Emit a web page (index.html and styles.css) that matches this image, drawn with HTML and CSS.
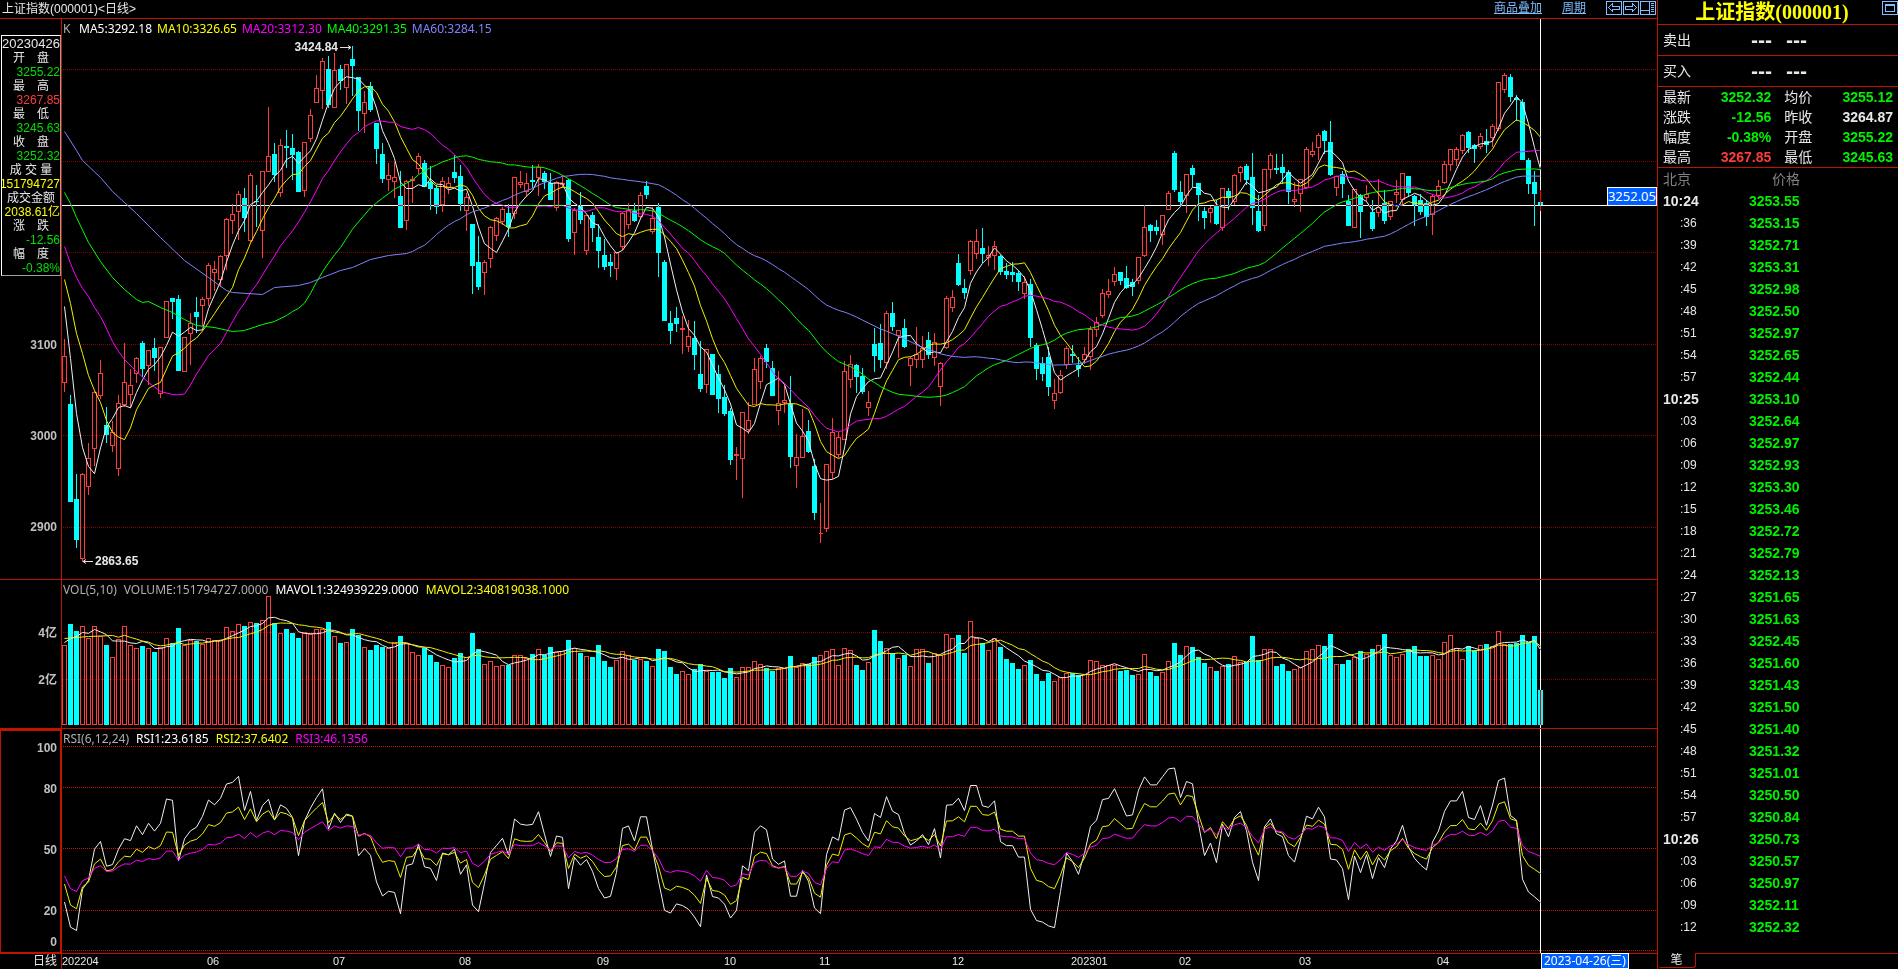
FILE: index.html
```html
<!DOCTYPE html>
<html lang="zh-CN">
<head>
<meta charset="utf-8">
<title>上证指数(000001)</title>
<link rel="stylesheet" href="styles.css">
</head>
<body>
<div class="app">
  <main class="board">
    <header class="topbar">
      <h1 class="topbar-title">上证指数(000001)&lt;日线&gt;</h1>
      <nav class="topbar-tools">
        <a class="tool-link" href="#overlay">商品叠加</a>
        <a class="tool-link" href="#period">周期</a>
        <div class="tool-buttons">
          <button class="icon-button" type="button" aria-label="左移"><svg width="17" height="15" viewBox="0 0 17 15"><path d="M.5 1.500h15v13H.5z M2.500 7.500l4-4v2.500h7v3h-7v2.500z"/></svg></button>
          <button class="icon-button" type="button" aria-label="右移"><svg width="17" height="15" viewBox="0 0 17 15"><path d="M.5 1.500h15v13H.5z M13.500 7.500l-4-4v2.500h-7v3h7v2.500z"/></svg></button>
          <button class="icon-button" type="button" aria-label="分栏"><svg width="17" height="15" viewBox="0 0 17 15"><path d="M.5 1.500h15v13H.5z M9.500 1.500v13 M.5 10.500h9 M11 3.500h3 M11 5.500h3 M11 7.500h3 M11 9.500h3 M11 11.500h3"/></svg></button>
        </div>
      </nav>
    </header>

    <section class="pane pane-price">
      <div class="axis axis-price">
        <dl class="info">
          <dd class="info-date">20230426</dd>
          <dt>开　盘</dt><dd class="down">3255.22</dd>
          <dt>最　高</dt><dd class="up">3267.85</dd>
          <dt>最　低</dt><dd class="down">3245.63</dd>
          <dt>收　盘</dt><dd class="down">3252.32</dd>
          <dt>成 交 量</dt><dd class="amount">151794727</dd>
          <dt>成交金额</dt><dd class="amount">2038.61亿</dd>
          <dt>涨　跌</dt><dd class="down">-12.56</dd>
          <dt>幅　度</dt><dd class="down">-0.38%</dd>
        </dl>
        <ul class="scale scale-price"><li>3100</li><li>3000</li><li>2900</li></ul>
      </div>
      <div class="plot">
        <svg id="price" class="chart" viewBox="62 19 1595 560" preserveAspectRatio="none"></svg>
        <p class="legend"><span class="c-name legend-k">K</span><span class="c-white">MA5:3292.18</span><span class="c-yellow">MA10:3326.65</span><span class="c-magenta">MA20:3312.30</span><span class="c-green">MA40:3291.35</span><span class="c-blue">MA60:3284.15</span></p>
        <span class="mark mark-high">3424.84<svg width="13" height="7" viewBox="0 0 13 7"><path d="M1 3.500h11 M9 1.500l3 2-3 2"/></svg></span>
        <span class="mark mark-low"><svg width="12" height="7" viewBox="0 0 12 7"><path d="M1 3.500h10 M4 1.500l-3 2 3 2"/></svg>2863.65</span>
        <span class="tag tag-price">3252.05</span>
      </div>
    </section>

    <section class="pane pane-volume">
      <div class="axis"><ul class="scale scale-volume"><li>4亿</li><li>2亿</li></ul></div>
      <div class="plot">
        <svg id="volume" class="chart" viewBox="62 580 1595 148" preserveAspectRatio="none"></svg>
        <p class="legend legend-wide"><span class="c-name">VOL(5,10)</span><span class="c-name">VOLUME:151794727.0000</span><span class="c-white">MAVOL1:324939229.0000</span><span class="c-yellow">MAVOL2:340819038.1000</span></p>
      </div>
    </section>

    <section class="pane pane-rsi">
      <div class="axis axis-active"><ul class="scale scale-rsi"><li>100</li><li>80</li><li>50</li><li>20</li><li>0</li></ul></div>
      <div class="plot">
        <svg id="rsi" class="chart" viewBox="62 729 1595 224" preserveAspectRatio="none"></svg>
        <p class="legend legend-wide"><span class="c-name">RSI(6,12,24)</span><span class="c-white">RSI1:23.6185</span><span class="c-yellow">RSI2:37.6402</span><span class="c-magenta">RSI3:46.1356</span></p>
      </div>
    </section>

    <footer class="timeline">
      <span class="timeline-name">日线</span>
      <div class="timeline-scale">
        <span>202204</span><span>06</span><span>07</span><span>08</span><span>09</span><span>10</span><span>11</span><span>12</span><span>202301</span><span>02</span><span>03</span><span>04</span>
        <span class="tag tag-date">2023-04-26(三)</span>
      </div>
    </footer>
  </main>

  <aside class="side">
    <header class="side-head">
      <h2 class="side-title">上证指数(000001)</h2>
      <button class="icon-button side-window" type="button" aria-label="窗口"><svg width="16" height="15" viewBox="0 0 16 15"><path d="M.5 1.500h15v13H.5z M3.500 4.500h9v7h-9z M3.500 5.500h9"/></svg></button>
    </header>
    <div class="order"><span>卖出</span><b>---</b><b>---</b></div>
    <div class="order"><span>买入</span><b>---</b><b>---</b></div>
    <table class="quote">
      <tr><th>最新</th><td class="down">3252.32</td><th>均价</th><td class="down">3255.12</td></tr>
      <tr><th>涨跌</th><td class="down">-12.56</td><th>昨收</th><td>3264.87</td></tr>
      <tr><th>幅度</th><td class="down">-0.38%</td><th>开盘</th><td class="down">3255.22</td></tr>
      <tr><th>最高</th><td class="up">3267.85</td><th>最低</th><td class="down">3245.63</td></tr>
    </table>
    <table class="ticks">
      <thead><tr><th>北京</th><th>价格</th></tr></thead>
      <tbody id="ticks"></tbody>
    </table>
    <footer class="side-foot"><button class="side-tab" type="button">笔</button><span class="side-rule"></span></footer>
  </aside>
</div>
<script src="chart.js"></script>
</body>
</html>
```

FILE: styles.css
```css
* { box-sizing: border-box; }

body {
  margin: 0;
  background: #000;
  color: #e8e8e8;
  font: 12px/14px "Liberation Sans", "Noto Sans CJK SC", sans-serif;
}

h1, h2, p, ul, dl, dd { margin: 0; padding: 0; font-weight: normal; }
ul { list-style: none; }
table { border-collapse: collapse; }
button { padding: 0; border: 0; background: none; color: inherit; font: inherit; }

.app {
  display: grid;
  grid-template-columns: minmax(0, 1fr) 241px;
  min-height: 100vh;
}

.board {
  display: grid;
  grid-template-rows: 19px minmax(0, 561fr) minmax(0, 149fr) minmax(0, 225fr) 15px;
  min-width: 0;
}

.topbar {
  display: flex;
  justify-content: space-between;
  border-bottom: 1px solid #c01400;
}
.topbar-title { padding-left: 2px; font-size: 12px; line-height: 18px; }
.topbar-tools { display: flex; gap: 20px; line-height: 17px; }
.tool-link { color: #80bcff; text-decoration: underline; }
.tool-buttons { display: flex; }
.icon-button { display: block; height: 15px; }
.icon-button svg { display: block; fill: none; stroke: #80bcff; shape-rendering: crispEdges; }

.pane {
  display: grid;
  grid-template-columns: 61px minmax(0, 1fr);
  min-height: 0;
  border-bottom: 1px solid #c01400;
}
.plot { position: relative; min-height: 0; border-left: 1px solid #c01400; }
.chart { display: block; width: 100%; height: 100%; background: #000; }

.axis { min-height: 0; overflow: hidden; }
.axis-active { border: 2px solid #c01400; border-width: 2px 1px 1px 1px; }
.scale {
  display: flex;
  flex-direction: column;
  padding-right: 4px;
  color: #c0c0c0;
  font-weight: bold;
  line-height: 14px;
  text-align: right;
}
.scale-price { gap: 77px; padding-top: 62px; }
.scale-volume { gap: 33px; padding-top: 46px; }
.scale-rsi { display: grid; grid-template-rows: 41px 61px 61px 31px 14px; padding: 10px 3px 0 0; }

.info {
  margin: 16px 0 0 1px;
  padding-top: 1px;
  border: 1px solid #fff;
  border-color: #fff #a0a0a0 #a0a0a0 #fff;
  line-height: 14px;
}
.info dt { text-align: center; white-space: pre; }
.info dd {
  display: flex;
  justify-content: flex-end;
  height: 14px;
  overflow: hidden;
  white-space: nowrap;
}
.info .info-date { justify-content: center; font-size: 13px; }
.info .down { color: #00e000; }
.info .amount { color: #ff0; }

.down { color: #00f000; }
.up { color: #ff3c3c; }

.legend {
  position: absolute;
  top: 1px;
  left: 1px;
  display: flex;
  gap: 5px;
  font: 12px/17px "Noto Sans", sans-serif;
}
.legend-wide { gap: 7px; }
.legend-k { width: 11px; }
.c-name { color: #b0b0b0; }
.c-white { color: #fff; }
.c-yellow { color: #ff0; }
.c-magenta { color: #f0f; }
.c-green { color: #0f0; }
.c-blue { color: #8080ff; }

.mark { position: absolute; display: flex; align-items: center; gap: 1px; font-weight: bold; }
.mark svg { fill: none; stroke: #e0e0e0; }
.mark-high { top: 21px; right: 1305px; }
.mark-low { left: 20px; bottom: 11px; }

.tag {
  position: absolute;
  border: 1px solid #fff;
  background: #0060ff;
  color: #fff;
  font-family: "Noto Sans", "Noto Sans CJK SC", sans-serif;
  white-space: nowrap;
}
.tag-price { top: 168px; right: 0; font-size: 13px; line-height: 17px; }
.tag-date { top: -1px; left: 1479px; padding: 0 2px; font-size: 12px; line-height: 14px; }

.timeline { display: grid; grid-template-columns: 61px minmax(0, 1fr); line-height: 15px; }
.timeline-name { padding-right: 4px; text-align: right; }
.timeline-scale {
  position: relative;
  display: grid;
  grid-template-columns: 145fr 126fr 126fr 138fr 127fr 95fr 133fr 119fr 108fr 120fr 138fr 220fr;
  border-left: 1px solid #c01400;
  font-size: 11px;
}

.side {
  display: flex;
  flex-direction: column;
  border-left: 1px solid #c01400;
}
.side-head {
  display: flex;
  height: 25px;
  border-bottom: 1px solid #c01400;
}
.side-title {
  flex: 1;
  padding-left: 4px;
  color: #ff0;
  font: bold 20px/24px "Liberation Serif", "Noto Sans CJK SC", serif;
  text-align: center;
}
.order {
  display: grid;
  grid-template-columns: 88px 35px 1fr;
  height: 31px;
  padding-left: 5px;
  border-bottom: 1px solid #c01400;
  font-size: 14px;
  line-height: 30px;
}
.order b { font: bold 17px/32px "DejaVu Sans", sans-serif; }

.quote { width: 100%; font-size: 14px; line-height: 20px; }
.quote th { padding: 0 0 0 5px; font-weight: normal; text-align: left; }
.quote th + td + th { padding-left: 13px; }
.quote td { padding: 0; font-weight: bold; text-align: right; }
.quote td:last-child { padding-right: 5px; }
.quote td:nth-child(2) { width: 70px; }

.ticks { margin-bottom: auto; border-top: 1px solid #c01400; border-collapse: separate; border-spacing: 0; font-size: 14px; }
.ticks th { padding: 0 0 0 5px; color: #808080; font-weight: normal; line-height: 22px; text-align: left; }
.ticks th + th { padding-left: 73px; }
.ticks td { padding: 0; color: #00f000; font-weight: bold; line-height: 22px; }
.ticks td + td { padding-left: 50px; }
.ticks .tick-minute { width: 41px; padding-left: 5px; color: #e8e8e8; }
.ticks .tick-second { padding-left: 22px; color: #e8e8e8; font-size: 12px; font-weight: normal; }

.side-foot { display: flex; height: 16px; }
.side-tab {
  width: 38px;
  height: 15px;
  border: 1px solid #c01400;
  border-width: 0 1px 1px 0;
  border-radius: 0 0 3px 3px;
  line-height: 14px;
}
.side-rule { flex: 1; border-top: 1px solid #c01400; }

.grid { stroke: #8c0000; stroke-dasharray: 1 1; shape-rendering: crispEdges; }
.grid-bright { stroke: #c81400; }
.rise { fill: none; stroke: #ff3c3c; shape-rendering: crispEdges; }
.fall { fill: #0ff; stroke: none; shape-rendering: crispEdges; }
.line { fill: none; stroke-width: 1; }
.line-white { stroke: #f0f0f0; }
.line-yellow { stroke: #f0f000; }
.line-magenta { stroke: #f0f; }
.line-green { stroke: #0f0; }
.line-blue { stroke: #8080ff; }
.cross { fill: #fff; mix-blend-mode: difference; shape-rendering: crispEdges; }
```

FILE: chart.js
```js
// Daily candles: kind (R rise, F fall), high, body top, body bottom, low, in chart units.
const CANDLES = `R339,356,382,391 F395,404,502,502 F474,499,540,548 R473,474,558,561 R443,458,486,494 R391,392,448,465 R360,373,395,398 F407,425,435,443 R421,432,445,451 R395,403,468,475
R343,382,404,406 R369,385,394,407 R357,358,373,382 F341,343,369,377 R350,350,365,384 F338,348,358,371 R347,347,393,397 R301,301,337,337 F298,298,302,319 F295,299,371,371
R337,337,371,371 R313,323,333,364 F297,312,317,333 R297,299,305,325 R263,265,298,305 R261,269,272,290 R255,256,279,286 R218,219,255,269 R204,214,220,233 R191,194,211,239
F188,198,218,232 R173,175,240,241 F185,201,202,227 R171,171,230,257 R107,156,171,171 F143,154,175,182 R139,145,192,196 F130,146,148,168 F134,148,155,180 F151,152,192,192
R142,142,190,196 R109,115,138,141 R75,88,102,102 R58,61,90,108 F56,69,105,108 R53,70,107,107 F65,69,81,90 R64,64,87,103 F46,59,66,96 F77,77,111,131
R91,102,113,132 F82,86,110,112 F123,123,149,164 F143,154,179,183 R163,175,179,190 R162,177,181,197 F171,196,228,228 R180,181,220,229 R176,179,180,202 R153,156,168,173
F160,163,187,187 F166,182,189,210 F185,188,207,214 R177,181,204,211 R177,183,187,193 F155,172,178,183 F165,176,204,211 R193,197,210,230 F224,224,266,294 F236,262,287,290
R260,262,272,294 R226,227,258,267 R217,218,235,240 R207,209,221,224 F204,213,227,237 R177,177,213,218 R171,182,184,187 R173,183,191,195 F165,180,182,188 R164,167,177,195
F171,173,182,189 F173,183,200,200 R181,182,207,210 R175,183,184,187 F179,180,239,242 R208,210,232,254 F192,206,220,224 R215,215,250,254 F212,215,228,242 F224,237,251,268
F239,255,267,270 F254,262,266,277 R252,252,268,279 R212,213,246,249 R203,210,224,228 F203,211,221,222 R192,195,216,218 F181,186,195,199 R207,218,231,233 F203,207,253,277
F260,262,321,321 F311,323,331,344 F307,318,324,332 R316,328,329,353 R320,336,346,351 F321,338,355,370 F341,374,389,392 R349,349,384,392 F354,354,395,395 F365,374,399,413
F385,397,414,416 F408,411,460,465 R447,454,455,479 R412,412,458,497 R402,420,429,433 R358,369,404,404 R356,358,381,388 F344,348,362,368 F361,368,396,396 R371,403,410,424
R386,400,402,412 F376,404,457,468 R434,457,465,487 R409,436,457,457 F420,431,452,453 F459,466,513,520 R503,533,533,542 R464,464,528,531 R418,432,472,478 R432,437,454,457
R361,371,439,439 R355,364,379,387 F364,365,377,393 F368,376,392,394 R391,402,407,415 F328,344,356,372 F324,343,360,368 R311,313,362,368 F302,313,327,331 R330,330,335,357
F319,328,347,348 R357,358,365,385 R327,354,359,367 R336,348,359,367 F332,340,355,359 R333,342,357,365 R362,363,386,405 R296,298,347,348 R290,297,307,311 F254,263,285,286
F279,288,293,299 R240,241,270,274 R229,241,253,258 F228,248,254,263 R246,255,257,265 R241,246,255,269 F255,256,272,275 F263,271,275,279 F262,272,275,282 F270,273,282,291
R276,282,293,298 F279,284,338,347 F343,345,369,380 F357,363,374,381 F347,357,387,396 R379,393,400,408 R370,375,392,393 R346,348,364,368 F345,354,356,363 F357,365,369,377
R347,354,359,363 R326,329,356,369 R317,322,329,336 R289,293,315,317 R279,291,294,297 R267,274,281,285 F272,272,281,285 F266,278,288,289 F279,282,287,296 R257,257,280,283
R205,227,255,256 F224,225,231,242 F220,227,231,235 R215,215,234,244 R191,193,209,209 F151,153,190,192 F181,192,202,205 R174,174,195,212 F165,168,175,187 F183,183,195,221
F207,211,218,229 R206,208,212,222 F200,205,224,225 R188,188,227,230 F188,191,198,210 R174,175,201,204 R166,167,172,181 F164,166,180,185 F153,177,208,225 F195,211,231,232
R169,169,225,230 R153,155,169,178 F154,168,170,174 F154,167,173,184 F170,172,192,204 R182,199,201,206 R179,179,193,211 R147,149,187,188 R142,151,154,156 R133,135,147,159
F130,131,141,154 F121,142,175,176 R176,176,187,195 F171,174,184,198 F195,201,226,226 R189,189,227,227 F194,195,212,238 R185,194,197,201 F200,212,229,231 R179,207,212,216
F190,203,221,224 R201,201,216,219 R180,192,194,202 R173,173,199,204 F176,176,193,197 F195,196,205,226 F194,200,212,215 F200,203,217,226 R194,196,214,234 R180,186,195,198
R161,164,182,183 R149,149,164,170 R147,149,159,165 R134,135,150,153 F131,132,148,153 F144,145,149,163 R133,136,146,148 F129,141,145,153 R124,126,137,146 R82,82,128,130
R73,75,89,92 F74,77,97,102 F95,98,100,121 F99,102,160,160 F158,160,184,194 F171,182,194,226 F190,202,205,211`
  .split(/\s+/)
  .map(s => ({ rise: s[0] === 'R', v: s.slice(1).split(',').map(Number) }));

const VOLUMES = `645 624 631 626 638 626 636 645 657 639 626 645 648 646 648 652 647 638 643 628 645 640 641 644 638 640 640 627 631 624
626 622 623 620 596 623 633 629 633 638 632 634 629 629 622 636 643 642 629 635 647 650 645 647 648 642 636 643 652 655
648 655 662 665 667 658 653 657 633 649 664 661 666 665 665 655 655 658 654 649 655 647 652 651 640 648 653 656 657 645
661 667 660 651 655 660 659 661 666 649 651 667 674 671 674 669 664 671 672 672 678 668 677 667 667 661 664 668 671 668
668 656 667 663 664 657 655 651 649 665 648 650 665 670 662 630 641 648 653 658 655 666 649 649 663 653 655 634 638 635
653 621 638 643 650 638 647 659 663 669 665 660 674 681 673 681 677 673 673 675 674 660 661 665 665 665 671 670 675 674
654 672 676 672 661 643 655 646 647 657 663 667 671 666 664 656 662 662 636 660 649 649 666 664 671 669 667 651 649 645
646 634 664 664 660 657 651 654 649 645 634 655 657 654 649 646 656 656 655 659 642 635 648 659 646 650 645 644 646 631
644 644 643 635 642 636 690`.split(/\s+/).map(Number);

// Values of each average before its own window is filled: [day, value].
const SEEDS = {
  ma5: [[0, 306], [1, 358], [2, 413], [3, 447]],
  ma10: [[0, 279], [1, 303], [2, 333], [3, 353], [4, 375], [5, 390], [6, 402], [7, 420], [8, 432]],
  ma20: [[0, 246], [1, 263], [2, 277], [3, 288], [4, 296], [5, 307], [6, 316], [7, 328], [8, 341], [9, 351], [10, 359], [12, 371], [14, 382], [16, 391], [18, 394]],
  ma40: [[0, 192], [1, 203], [2, 217], [4, 242], [6, 261], [8, 277], [10, 289], [12, 299], [13, 302], [14, 301], [16, 307], [18, 312], [20, 319], [22, 325], [25, 327], [28, 331], [30, 330], [33, 324], [35, 321], [37, 315], [38, 311]],
  ma60: [[0, 131], [2, 150], [3, 160], [6, 177], [8, 191], [12, 213], [16, 237], [20, 260], [24, 277], [27, 290], [28, 292], [33, 294], [35, 287], [39, 285], [41, 282], [43, 277], [46, 270], [48, 267], [51, 259], [54, 255], [57, 253], [58, 251]],
  vol5: [[0, 642], [1, 638], [2, 636], [3, 632]],
  vol10: [[0, 638], [4, 636], [8, 635]]
};

const TICKS = `10:24 3253.55 :36 3253.15 :39 3252.71 :42 3253.31 :45 3252.98 :48 3252.50 :51 3252.97 :54 3252.65 :57 3252.44
10:25 3253.10 :03 3252.64 :06 3252.97 :09 3252.93 :12 3253.30 :15 3253.46 :18 3252.72 :21 3252.79 :24 3252.13 :27 3251.65
:30 3251.63 :33 3252.45 :36 3251.60 :39 3251.43 :42 3251.50 :45 3251.40 :48 3251.32 :51 3251.01 :54 3250.50 :57 3250.84
10:26 3250.73 :03 3250.57 :06 3250.97 :09 3252.11 :12 3252.32`.split(/\s+/);

const dayX = i => 64 + 6 * i;
const closes = CANDLES.map(c => (c.rise ? c.v[1] : c.v[2]));

function average(values, n, seed) {
  const points = seed.map(([i, y]) => [dayX(i) + 0.5, y + 0.5]);
  for (let i = n - 1; i < values.length; i++) {
    let sum = 0;
    for (let k = i - n + 1; k <= i; k++) sum += values[k];
    points.push([dayX(i) + 0.5, sum / n + 0.5]);
  }
  return points;
}

function strength(n, start, swing) {
  let gain = start / 100 * swing;
  let move = swing;
  const rows = [start];
  for (let i = 1; i < closes.length; i++) {
    const d = closes[i - 1] - closes[i];
    gain = (gain * (n - 1) + Math.max(d, 0)) / n;
    move = (move * (n - 1) + Math.abs(d)) / n;
    rows.push(gain / move * 100);
  }
  return rows.map((r, i) => [dayX(i) + 0.5, 951 - 2.05 * r]);
}

const polyline = (points, color) =>
  `<polyline class="line line-${color}" points="${points.map(p => p[0] + ',' + p[1].toFixed(1)).join(' ')}"/>`;
const grid = (ys, extra = '') =>
  ys.map(y => `<path class="grid ${extra}" d="M63 ${y}.5H1657"/>`).join('');
const vertical = (top, height) => `<rect class="cross" x="1540" y="${top}" width="1" height="${height}"/>`;

const candles = CANDLES.map(({ rise, v: [high, top, bottom, low] }, i) => {
  const x = dayX(i);
  return rise
    ? `<path class="rise" d="M${x + 0.5} ${high}V${top}M${x + 0.5} ${bottom + 1}V${low + 1}M${x - 1.5} ${top + 0.5}h4v${bottom - top}h-4z"/>`
    : `<path class="fall" d="M${x} ${high}h1V${low}h-1zM${x - 2} ${top}h5V${Math.max(bottom, top + 1)}h-5z"/>`;
}).join('');

const bars = VOLUMES.map((y, i) => {
  const x = dayX(i);
  return CANDLES[i].rise
    ? `<rect class="rise" x="${x - 1.5}" y="${y + 0.5}" width="4" height="${724 - y}"/>`
    : `<rect class="fall" x="${x - 2}" y="${y}" width="5" height="${725 - y}"/>`;
}).join('');

document.getElementById('price').innerHTML =
  grid([69, 161, 252, 344, 435, 527]) + candles +
  polyline(average(closes, 5, SEEDS.ma5), 'white') +
  polyline(average(closes, 10, SEEDS.ma10), 'yellow') +
  polyline(average(closes, 20, SEEDS.ma20), 'magenta') +
  polyline(average(closes, 40, SEEDS.ma40), 'green') +
  polyline(average(closes, 60, SEEDS.ma60), 'blue') +
  vertical(19, 560) + '<rect class="cross" x="62" y="205" width="1595" height="1"/>';

document.getElementById('volume').innerHTML =
  grid([632, 679]) + bars +
  polyline(average(VOLUMES, 5, SEEDS.vol5), 'white') +
  polyline(average(VOLUMES, 10, SEEDS.vol10), 'yellow') +
  vertical(580, 148);

document.getElementById('rsi').innerHTML =
  grid([746, 787, 848, 910, 950], 'grid-bright') +
  polyline(strength(6, 23.9, 27.5), 'white') +
  polyline(strength(12, 32.7, 29), 'yellow') +
  polyline(strength(24, 36.7, 30.6), 'magenta') +
  vertical(729, 224);

let rows = '';
for (let i = 0; i < TICKS.length; i += 2) {
  const kind = TICKS[i][0] === ':' ? 'tick-second' : 'tick-minute';
  rows += `<tr><td class="${kind}">${TICKS[i]}</td><td>${TICKS[i + 1]}</td></tr>`;
}
document.getElementById('ticks').innerHTML = rows;
```
